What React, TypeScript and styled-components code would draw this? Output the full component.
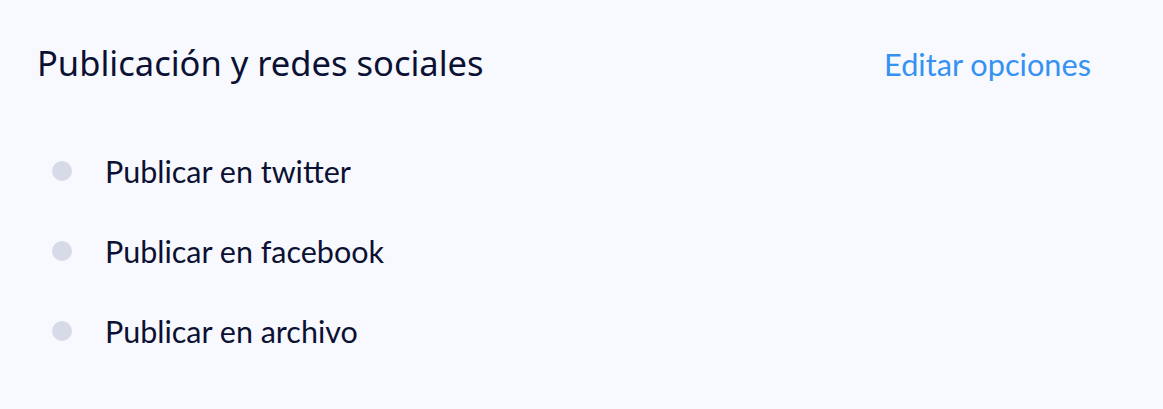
import React from 'react';
import styled, { createGlobalStyle } from 'styled-components';

const GlobalStyle = createGlobalStyle`
  html, body {
    margin: 0;
    padding: 0;
    background-color: #f8f9fe;
  }
`;

interface Option {
  id: string;
  label: string;
}

const options: Option[] = [
  { id: 'twitter', label: 'Publicar en twitter' },
  { id: 'facebook', label: 'Publicar en facebook' },
  { id: 'archive', label: 'Publicar en archivo' },
];

const App: React.FC = () => {
  return (
    <>
      <GlobalStyle />
      <Panel>
        <Header>
          <Title>Publicación y redes sociales</Title>
          <EditLink href="#">Editar opciones</EditLink>
        </Header>
        <OptionList>
          {options.map(option => (
            <OptionRow key={option.id}>
              <Dot />
              <OptionLabel>{option.label}</OptionLabel>
            </OptionRow>
          ))}
        </OptionList>
      </Panel>
    </>
  );
};

const Panel = styled.div`
  width: 1163px;
  height: 409px;
  box-sizing: border-box;
  padding: 39px 72px 0 37px;
  background-color: #f8f9fe;
`;

const Header = styled.div`
  display: flex;
  align-items: baseline;
  justify-content: space-between;
  height: 52px;
`;

const Title = styled.h2`
  margin: 0;
  font-family: 'Noto Sans', sans-serif;
  font-size: 34.5px;
  font-weight: 400;
  color: #0b1133;
`;

const EditLink = styled.a`
  font-family: 'Lato', sans-serif;
  font-size: 30.7px;
  color: #3592f2;
  text-decoration: none;
`;

const OptionList = styled.ul`
  list-style: none;
  margin: 0;
  padding: 60px 0 0 15px;
  display: flex;
  flex-direction: column;
  gap: 40px;
`;

const OptionRow = styled.li`
  display: flex;
  align-items: center;
  height: 40px;
`;

const Dot = styled.span`
  width: 20px;
  height: 20px;
  border-radius: 50%;
  background-color: #d7dae7;
  flex-shrink: 0;
`;

const OptionLabel = styled.span`
  margin-left: 33px;
  font-family: 'Lato', sans-serif;
  font-size: 30.5px;
  color: #0b1133;
`;

export default App;
